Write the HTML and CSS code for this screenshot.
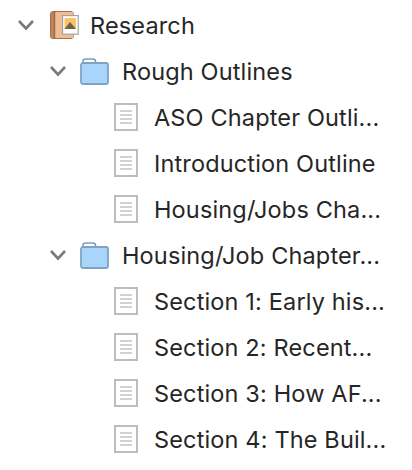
FILE: index.html
```html
<!DOCTYPE html>
<html lang="en">
<head>
<meta charset="utf-8">
<title>Research</title>
<link rel="stylesheet" href="styles.css">
</head>
<body>
<svg class="defs" width="0" height="0" aria-hidden="true">
  <symbol id="chev" viewBox="0 0 18 12"><path d="M2 2 9 9.5 16 2" fill="none" stroke="#7b7b7b" stroke-width="2.6"/></symbol>
  <symbol id="folder" viewBox="0 0 30 27"><path d="M3 6V3.5Q3 1 5.5 1H13Q15.5 1 15.5 3.5V6" fill="none" stroke="#7d9dbb" stroke-width="1.6"/><rect x="1" y="5" width="27" height="21" rx="2" fill="#a9d5fb" stroke="#7fa3c4" stroke-width="1.8"/></symbol>
  <symbol id="doc" viewBox="0 0 24 28"><rect x="1" y="1" width="22" height="26" fill="#fff" stroke="#bdbdbd" stroke-width="2"/><path d="M6 8H18M6 12H18M6 16H18M6 20H18" stroke="#c4c4c4" stroke-width="1.6"/></symbol>
</svg>
<ul class="tree">
  <li class="row lvl0">
    <svg class="chev"><use href="#chev"/></svg>
    <svg class="book" viewBox="0 0 29 28" width="29" height="28"><rect x="0.5" y="0.5" width="23" height="27" rx="2.5" fill="#c5835b" stroke="#a9704c"/><rect x="5" y="1" width="18.5" height="26" rx="1" fill="#edbd97"/><path d="M4.5 1V27" stroke="#9c6545" stroke-width="1.4"/><rect x="12.6" y="4.6" width="15.6" height="18.6" fill="#fff" stroke="#a3a3a3" stroke-width="1.2"/><rect x="14.5" y="7" width="11.5" height="11" fill="#f6c365"/><path d="M14.5 18 20 11 26 18Z" fill="#6f6250"/></svg>
    <span class="label">Research</span>
  </li>
  <li class="row lvl1">
    <svg class="chev"><use href="#chev"/></svg>
    <svg class="folder"><use href="#folder"/></svg>
    <span class="label">Rough Outlines</span>
  </li>
  <li class="row lvl2"><svg class="doc"><use href="#doc"/></svg><span class="label">ASO Chapter Outli...</span></li>
  <li class="row lvl2"><svg class="doc"><use href="#doc"/></svg><span class="label">Introduction Outline</span></li>
  <li class="row lvl2"><svg class="doc"><use href="#doc"/></svg><span class="label">Housing/Jobs Cha...</span></li>
  <li class="row lvl1">
    <svg class="chev"><use href="#chev"/></svg>
    <svg class="folder"><use href="#folder"/></svg>
    <span class="label">Housing/Job Chapter...</span>
  </li>
  <li class="row lvl2"><svg class="doc"><use href="#doc"/></svg><span class="label">Section 1: Early his...</span></li>
  <li class="row lvl2"><svg class="doc"><use href="#doc"/></svg><span class="label">Section 2: Recent...</span></li>
  <li class="row lvl2"><svg class="doc"><use href="#doc"/></svg><span class="label">Section 3: How AF...</span></li>
  <li class="row lvl2"><svg class="doc"><use href="#doc"/></svg><span class="label">Section 4: The Buil...</span></li>
</ul>
</body>
</html>
```
FILE: styles.css
```css
html, body {
  margin: 0;
  padding: 0;
  background: #fff;
  overflow: hidden;
}
.defs {
  position: absolute;
}
.tree {
  list-style: none;
  margin: 0;
  padding: 2px 0 0;
  font-family: Inter, "Liberation Sans", sans-serif;
  font-size: 23.5px;
  letter-spacing: 0.15px;
  color: #262626;
}
.row {
  display: flex;
  align-items: center;
  height: 46px;
  white-space: nowrap;
}
.lvl0 { padding-left: 17px; }
.lvl1 { padding-left: 49px; }
.lvl2 { padding-left: 114px; }
.chev {
  width: 18px;
  height: 12px;
  flex: none;
}
.book {
  flex: none;
  margin-left: 15px;
}
.folder {
  width: 30px;
  height: 27px;
  flex: none;
  margin-left: 13px;
}
.doc {
  width: 24px;
  height: 28px;
  flex: none;
}
.lvl0 .label { margin-left: 11px; }
.lvl1 .label { margin-left: 12px; }
.lvl2 .label { margin-left: 16px; }
```
